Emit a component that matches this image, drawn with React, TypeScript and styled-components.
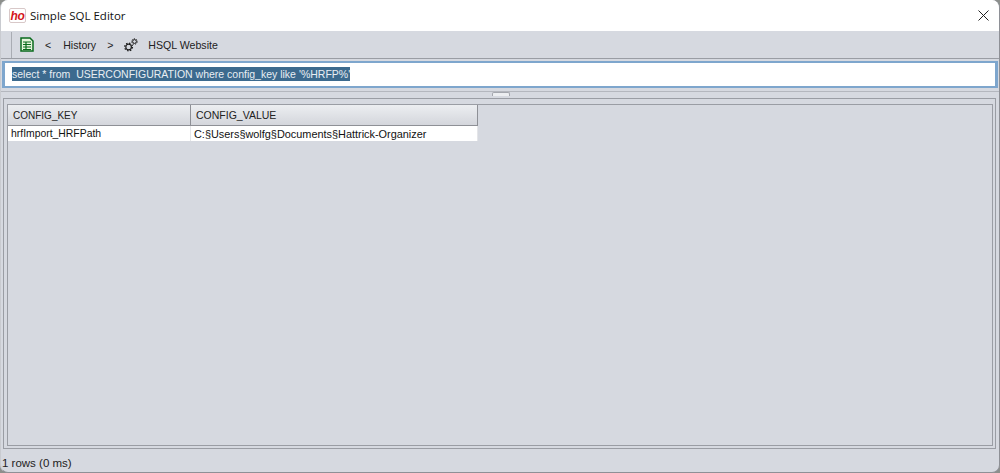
import React from "react";
import styled, { createGlobalStyle } from "styled-components";

const GlobalStyle = createGlobalStyle`
  html, body {
    margin: 0;
    padding: 0;
    height: 100%;
    overflow: hidden;
    background: #8c8f8c;
  }
`;

const Window = styled.div`
  width: 1000px;
  height: 473px;
  box-sizing: border-box;
  display: flex;
  flex-direction: column;
  background: #d6d9e0;
  border-radius: 8px;
  border-right: 1px solid #8e9096;
  border-bottom: 1px solid #8e9096;
  border-left: 1px solid #c9cbd0;
  overflow: hidden;
  font-family: "Liberation Sans", Arial, sans-serif;
  font-size: 11px;
  color: #222;
`;

const TitleBar = styled.div`
  height: 31px;
  flex: none;
  display: flex;
  align-items: center;
  padding: 0 10px 0 8px;
  background: #fff;
`;

const AppLogo = styled.div`
  width: 15px;
  height: 13px;
  margin-right: 4px;
  border: 1px solid #d8c8c8;
  border-radius: 2px;
  display: flex;
  align-items: center;
  justify-content: center;
  color: #d4161c;
  font-size: 12px;
  font-weight: 700;
  font-style: italic;
  letter-spacing: -0.3px;
  line-height: 1;
`;

const WindowTitle = styled.div`
  flex: 1;
  font-family: "Open Sans", "Noto Sans", sans-serif;
  font-size: 11.5px;
  color: #111;
`;

const CloseIcon = styled.svg`
  width: 11px;
  height: 11px;
  margin-bottom: 1px;
`;

const Toolbar = styled.div`
  height: 28px;
  flex: none;
  box-sizing: border-box;
  display: flex;
  align-items: center;
  padding-left: 10px;
  border-bottom: 1px solid #9a9da4;
`;

const Grip = styled.div`
  width: 1px;
  height: 26px;
  background: #a9acb3;
  margin-right: 8px;
`;

const ToolText = styled.span<{ $ml: number }>`
  display: flex;
  margin-left: ${(p) => p.$ml}px;
  font-size: 10.6px;
  color: #222;
`;

const EditorInput = styled.div`
  height: 27px;
  flex: none;
  box-sizing: border-box;
  margin: 2px 1px 0 1px;
  display: flex;
  align-items: center;
  padding: 0 0 1px 7px;
  background: #fff;
  border: 2px solid #7ea6cd;
  border-left-width: 3px;
  border-right-width: 3px;
`;

const Selected = styled.span`
  background: #3c6a8e;
  color: #e8eef3;
  height: 14px;
  line-height: 14px;
  font-size: 10.5px;
  white-space: pre;
`;

const Splitter = styled.div`
  height: 10px;
  flex: none;
  box-sizing: border-box;
  margin-top: 3px;
  margin-bottom: -3px;
  border-top: 1px solid #b4b7be;
  display: flex;
  justify-content: center;
  padding-left: 2px;
`;

const SplitKnob = styled.div`
  width: 18px;
  height: 4px;
  box-sizing: border-box;
  background: #eceef1;
  border: 1px solid #a4a7ae;
  border-bottom: none;
  border-radius: 2px 2px 0 0;
`;

const Outer = styled.div`
  flex: 1;
  min-height: 0;
  margin: 0 3px 0 2px;
  padding: 5px 2px 2px 3px;
  border: 1px solid #9a9da4;
`;

const Inner = styled.div`
  height: 100%;
  box-sizing: border-box;
  border: 1px solid #9a9da4;
`;

const Grid = styled.div`
  display: grid;
  grid-template-columns: 183px 287px;
  width: 470px;
`;

const HeadCell = styled.div<{ $size: number }>`
  height: 21px;
  box-sizing: border-box;
  display: flex;
  align-items: center;
  padding-left: 5px;
  background: linear-gradient(#eceef1, #d4d6dc);
  border-right: 1px solid #8e9096;
  border-bottom: 1px solid #8e9096;
  font-size: ${(p) => p.$size}px;
  color: #222;
`;

const Cell = styled.div<{ $size: number }>`
  height: 15px;
  display: flex;
  align-items: center;
  padding-left: 3px;
  background: #fff;
  border-right: 1px solid #e4e5e8;
  font-size: ${(p) => p.$size}px;
  color: #111;
`;

const StatusBar = styled.div`
  height: 23px;
  flex: none;
  display: flex;
  align-items: center;
  padding: 5px 0 0 1px;
  box-sizing: border-box;
  font-size: 11.5px;
  color: #222;
`;

const SheetIcon = () => (
  <svg width="14" height="15" viewBox="0 0 14 15">
    <path d="M1 1h9l3 3v10H1z" fill="#e6f4dc" stroke="#086a1c" strokeWidth="1.5" />
    <path d="M3 5h8M3 7.5h8M3 10h8M3 12.5h8M6 5v8" stroke="#086a1c" strokeWidth="1.2" fill="none" />
  </svg>
);

const GearsIcon = () => (
  <svg width="14" height="14" viewBox="0 0 14 14" fill="none" stroke="#1c1c1c">
    <circle cx="4.6" cy="9" r="2.8" strokeWidth="1.2" />
    <circle cx="4.6" cy="9" r="3.9" strokeWidth="1.2" strokeDasharray="1.5 1.56" />
    <circle cx="10.5" cy="3.5" r="1.9" strokeWidth="1" />
    <circle cx="10.5" cy="3.5" r="2.8" strokeWidth="1" strokeDasharray="1.2 1.24" />
  </svg>
);

const App = () => {
  return (
    <>
      <GlobalStyle />
      <Window>
        <TitleBar>
          <AppLogo>ho</AppLogo>
          <WindowTitle>Simple SQL Editor</WindowTitle>
          <CloseIcon viewBox="0 0 11 11">
            <path d="M.5.5l10 10M10.5.5l-10 10" stroke="#222" strokeWidth="1" />
          </CloseIcon>
        </TitleBar>
        <Toolbar>
          <Grip />
          <SheetIcon />
          <ToolText $ml={11}>&lt;</ToolText>
          <ToolText $ml={12}>History</ToolText>
          <ToolText $ml={11}>&gt;</ToolText>
          <ToolText $ml={11}>
            <GearsIcon />
          </ToolText>
          <ToolText $ml={10}>HSQL Website</ToolText>
        </Toolbar>
        <EditorInput>
          <Selected>select * from  USERCONFIGURATION where config_key like '%HRFP%'</Selected>
        </EditorInput>
        <Splitter>
          <SplitKnob />
        </Splitter>
        <Outer>
          <Inner>
            <Grid>
              <HeadCell $size={10}>CONFIG_KEY</HeadCell>
              <HeadCell $size={10.5}>CONFIG_VALUE</HeadCell>
              <Cell $size={10.4}>hrfImport_HRFPath</Cell>
              <Cell $size={10.9}>C:§Users§wolfg§Documents§Hattrick-Organizer</Cell>
            </Grid>
          </Inner>
        </Outer>
        <StatusBar>1 rows (0 ms)</StatusBar>
      </Window>
    </>
  );
};

export default App;
